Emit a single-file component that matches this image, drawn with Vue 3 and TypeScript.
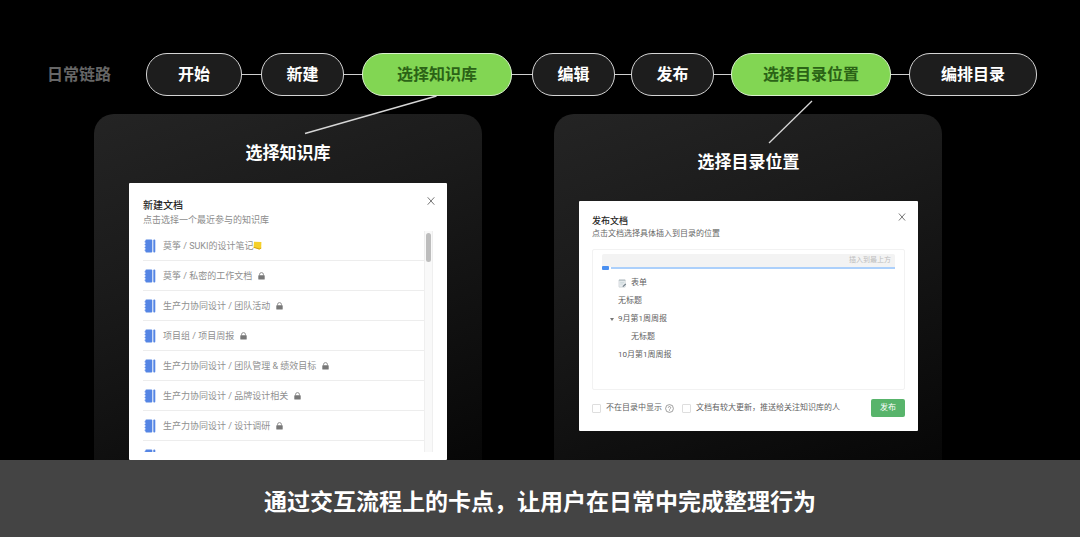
<script setup lang="ts">
interface Step {
  label: string
  size: 'regular' | 'compact' | 'roomy'
  active?: boolean
  /** Relative length of the connector that follows the step. */
  link?: number
}

interface Repo {
  name: string
  locked?: boolean
  note?: boolean
}

interface TreeNode {
  label: string
  icon?: boolean
  open?: boolean
  nested?: boolean
}

const steps: Step[] = [
  { label: '开始', size: 'regular', link: 19 },
  { label: '新建', size: 'compact', link: 18 },
  { label: '选择知识库', size: 'roomy', active: true, link: 20 },
  { label: '编辑', size: 'compact', link: 16 },
  { label: '发布', size: 'compact', link: 17 },
  { label: '选择目录位置', size: 'regular', active: true, link: 18 },
  { label: '编排目录', size: 'regular' },
]

const repos: Repo[] = [
  { name: '莫筝 / SUKI的设计笔记', note: true },
  { name: '莫筝 / 私密的工作文档', locked: true },
  { name: '生产力协同设计 / 团队活动', locked: true },
  { name: '项目组 / 项目周报', locked: true },
  { name: '生产力协同设计 / 团队管理 & 绩效目标', locked: true },
  { name: '生产力协同设计 / 品牌设计相关', locked: true },
  { name: '生产力协同设计 / 设计调研', locked: true },
  { name: '' },
]

const nodes: TreeNode[] = [
  { label: '表单', icon: true },
  { label: '无标题' },
  { label: '9月第1周周报', open: true },
  { label: '无标题', nested: true },
  { label: '10月第1周周报' },
]
</script>

<template>
  <div class="page">
    <header class="chain">
      <h1 class="chain-title">日常链路</h1>
      <ol class="steps">
        <template v-for="(step, i) in steps" :key="i">
          <li class="step" :class="[step.size, { active: step.active }]">{{ step.label }}</li>
          <li v-if="step.link" class="link" aria-hidden="true" :style="{ flexGrow: step.link }"></li>
        </template>
      </ol>
    </header>

    <main class="board">
      <section class="card card-repo">
        <svg class="pointer pointer-repo" width="134" height="40" viewBox="0 0 134 40" aria-hidden="true">
          <path d="M1 38.5L132.500 1" />
        </svg>
        <h2 class="card-title">选择知识库</h2>
        <div class="dialog dialog-repo">
          <button class="close" type="button" aria-label="关闭">
            <svg width="8" height="8" viewBox="0 0 8 8"><path d="M.7.3L7.300 7.700M7.300.3L.7 7.700" /></svg>
          </button>
          <h3 class="dialog-title">新建文档</h3>
          <p class="dialog-sub">点击选择一个最近参与的知识库</p>
          <div class="scroller">
            <ul class="repos">
              <li v-for="(repo, i) in repos" :key="i">
                <a class="repo" href="#">
                  <svg class="book" width="12" height="14" viewBox="0 0 12 14" aria-hidden="true">
                    <rect x="1.400" y=".5" width="6.900" height="13" rx="1" />
                    <rect x="9.300" y=".5" width="2" height="13" rx=".9" />
                    <path d="M.6 2.800h1.600M.6 5.600h1.600M.6 8.400h1.600M.6 11.200h1.600" />
                  </svg>
                  <span>{{ repo.name }}</span>
                  <svg v-if="repo.note" class="note" width="9" height="9" viewBox="0 0 9 9" aria-hidden="true">
                    <path d="M1 .7L8.400 1L8.200 7.400L6.300 8.600L.6 6.700Z" fill="#f5d02a" />
                    <path d="M.6 6.700L6.300 8.600L6.400 7.600L.7 5.900Z" fill="#cf9d12" />
                    <path d="M6.300 8.600L8.200 7.400L8.200 6.400L6.400 7.600Z" fill="#dba90f" />
                  </svg>
                  <svg v-if="repo.locked" class="lock" width="7" height="8" viewBox="0 0 7 8" aria-hidden="true">
                    <rect x=".3" y="3.300" width="6.400" height="4.200" rx=".5" />
                    <path d="M1.600 3.500V2.300a1.900 1.700 0 0 1 3.800 0V3.500" />
                  </svg>
                </a>
              </li>
            </ul>
            <div class="track"><div class="thumb"></div></div>
          </div>
        </div>
      </section>

      <section class="card card-place">
        <svg class="pointer pointer-place" width="46" height="44" viewBox="0 0 46 44" aria-hidden="true">
          <path d="M1 43L44 1" />
        </svg>
        <h2 class="card-title">选择目录位置</h2>
        <div class="dialog dialog-place">
          <button class="close" type="button" aria-label="关闭">
            <svg width="8" height="8" viewBox="0 0 8 8"><path d="M.9.5L7.100 7.500M7.100.5L.9 7.500" /></svg>
          </button>
          <h3 class="dialog-title">发布文档</h3>
          <p class="dialog-sub">点击文档选择具体插入到目录的位置</p>
          <div class="tree-box">
            <div class="insert">插入到最上方</div>
            <div class="drop-line"><i class="handle"></i><i class="rule"></i></div>
            <ul class="tree">
              <li v-for="(node, i) in nodes" :key="i" class="node" :class="{ nested: node.nested }">
                <span class="caret-slot"><i v-if="node.open" class="caret"></i></span>
                <svg v-if="node.icon" class="form-icon" width="9" height="9" viewBox="0 0 9 9" aria-hidden="true">
                  <rect x=".9" y=".8" width="6.400" height="7.400" rx=".4" fill="#e6ebee" stroke="#c3c9cc" stroke-width=".5" />
                  <path d="M1 1.200h6.200" stroke="#a9b4ba" stroke-width=".9" />
                  <path d="M2.200 3.400h3.800M2.200 5h3" stroke="#c0ccd2" stroke-width=".6" />
                  <path d="M4.800 7.700L7.800 5" stroke="#6f7d86" stroke-width="1.100" />
                </svg>
                <span>{{ node.label }}</span>
              </li>
            </ul>
          </div>
          <div class="actions">
            <label class="check"><input type="checkbox" /><span>不在目录中显示</span></label>
            <svg class="help" width="9" height="9" viewBox="0 0 9 9" aria-hidden="true">
              <circle cx="4.500" cy="4.500" r="3.900" />
              <path d="M3.300 3.700a1.200 1.200 0 1 1 1.700 1.100q-.5.2-.5.800M4.500 6.300v.7" />
            </svg>
            <label class="check"><input type="checkbox" /><span>文档有较大更新，推送给关注知识库的人</span></label>
            <button class="publish" type="button">发布</button>
          </div>
        </div>
      </section>
    </main>

    <footer class="caption">通过交互流程上的卡点，让用户在日常中完成整理行为</footer>
  </div>
</template>

<style>
body {
  margin: 0;
  background: #000;
}
</style>

<style scoped>
.page {
  box-sizing: border-box;
  display: flex;
  flex-direction: column;
  min-height: 100vh;
  overflow: hidden;
  background: #000;
  color: #fff;
  font-family: Roboto, "Noto Sans CJK SC", sans-serif;
}

h1, h2, h3, p, ul, ol {
  margin: 0;
  padding: 0;
  list-style: none;
}

.chain {
  display: flex;
  align-items: center;
  padding: 53px 43px 18px 47px;
}

.chain-title {
  flex: none;
  width: 99px;
  color: #666;
  font-size: 16px;
  font-weight: 600;
  line-height: 24px;
}

.steps {
  display: flex;
  flex: 1;
  align-items: center;
}

.step {
  box-sizing: border-box;
  flex: none;
  min-width: 83px;
  padding: 9px 31px 8px;
  border: 1px solid #d4d4d4;
  border-radius: 21px;
  background: #1d1d1d;
  font-size: 16px;
  font-weight: 700;
  line-height: 24px;
  text-align: center;
  white-space: nowrap;
}

.step.compact {
  padding-inline: 24px;
}

.step.roomy {
  padding-inline: 34px;
}

.step.active {
  background: #82d653;
  border-color: #d9f0cd;
  color: #2b6316;
  font-weight: 600;
}

.link {
  flex: 1 1 0;
  height: 1px;
  background: #cfcfcf;
}

.board {
  display: grid;
  flex: 1;
  grid-template-columns: 1fr 1fr;
  gap: 72px;
  padding: 0 138px 0 94px;
}

.card {
  position: relative;
  border-radius: 20px 20px 0 0;
  background: linear-gradient(160deg, #242424 0%, #1b1b1b 35%, #070707 100%);
}

.card-repo {
  padding: 27px 35px 0;
}

.card-place {
  padding: 36px 24px 29px 25px;
}

.pointer {
  position: absolute;
  left: 50%;
  fill: none;
  stroke: #d6d6d6;
  stroke-width: 1.3;
}

.pointer-repo {
  top: -19px;
  margin-left: 16px;
}

.pointer-place {
  top: -14px;
  margin-left: 20px;
}

.card-title {
  font-size: 17px;
  font-weight: 700;
  line-height: 24px;
  text-align: center;
}

.dialog {
  position: relative;
  background: #fff;
  border-radius: 1px;
}

.dialog-repo {
  margin-top: 18px;
  padding: 15px 14px 8px;
}

.dialog-place {
  margin-top: 27px;
  padding: 13px 13px 14px;
}

.close {
  position: absolute;
  top: 10px;
  right: 10px;
  display: grid;
  place-items: center;
  width: 12px;
  height: 12px;
  padding: 0;
  border: 0;
  background: none;
  stroke: #777;
  stroke-width: 1;
}

.dialog-repo .close {
  top: 12px;
}

.dialog-title {
  color: #262626;
  font-size: 10px;
  font-weight: 500;
  line-height: 16px;
}

.dialog-sub {
  color: #8c8c8c;
  font-size: 9px;
  line-height: 12px;
}

.dialog-place .dialog-title {
  font-size: 9px;
  line-height: 14px;
}

.dialog-place .dialog-sub {
  color: #666;
  font-size: 8px;
}

.scroller {
  display: flex;
  height: 221px;
  margin-top: 5px;
  overflow: hidden;
}

.repos {
  flex: 1;
}

.repo {
  box-sizing: border-box;
  display: flex;
  align-items: center;
  height: 30px;
  padding-left: 1px;
  border-bottom: 1px solid #ededed;
  color: #8f8f8f;
  font-size: 9px;
  line-height: 14px;
  text-decoration: none;
  white-space: nowrap;
}

.book {
  margin-right: 7px;
  fill: #5585e4;
  stroke: #5585e4;
  stroke-width: 0;
}

.book path {
  stroke-width: 1;
}

.lock {
  margin-left: 6px;
  fill: #777;
}

.lock path {
  fill: none;
  stroke: #777;
  stroke-width: 0.8;
}

.track {
  box-sizing: border-box;
  width: 9px;
  padding: 2px 1px 0;
  border: solid #efefef;
  border-width: 0 1px;
  background: #f9f9f9;
}

.thumb {
  width: 5px;
  height: 29px;
  border-radius: 3px;
  background: #bdbdbd;
}

.tree-box {
  margin-top: 9px;
  padding: 4px 9px 26px;
  border: 1px solid #f2f2f2;
  border-radius: 2px;
}

.insert {
  padding-right: 4px;
  border-radius: 2px 2px 0 0;
  background: #f3f3f3;
  color: #bdbdbd;
  font-size: 7px;
  line-height: 13px;
  text-align: right;
}

.drop-line {
  display: flex;
  align-items: center;
  gap: 2px;
  height: 2px;
  margin-bottom: 5px;
}

.handle {
  width: 7px;
  height: 4px;
  border-radius: 1px;
  background: #4a8ff0;
}

.rule {
  flex: 1;
  height: 2px;
  background: #acd0fb;
}

.tree {
  margin-bottom: -1px;
}

.node {
  display: flex;
  align-items: center;
  height: 18px;
  padding-left: 8px;
  color: #5f5f5f;
  font-size: 8px;
  line-height: 12px;
}

.node.nested {
  padding-left: 21px;
}

.caret-slot {
  width: 8px;
}

.caret {
  display: block;
  width: 0;
  border: solid transparent;
  border-width: 3px 2px 0;
  border-top-color: #777;
}

.form-icon {
  margin-right: 4px;
}

.actions {
  display: flex;
  align-items: center;
  margin-top: 9px;
  color: #5f5f5f;
  font-size: 8px;
  line-height: 12px;
  white-space: nowrap;
}

.check {
  display: flex;
  align-items: center;
  gap: 5px;
}

.check input {
  appearance: none;
  box-sizing: border-box;
  width: 9px;
  height: 9px;
  margin: 0;
  border: 1px solid #dedede;
  border-radius: 1px;
  background: #fff;
}

.help {
  margin: 0 8px 0 3px;
  fill: none;
  stroke: #777;
  stroke-width: 0.7;
}

.publish {
  margin-left: auto;
  padding: 3px 9px;
  border: 0;
  border-radius: 2px;
  background: #58b46b;
  color: #fff;
  font: inherit;
}

.caption {
  position: relative;
  padding: 27px 16px 18px;
  background: #444;
  font-size: 23px;
  font-weight: 700;
  line-height: 32px;
  text-align: center;
}
</style>
